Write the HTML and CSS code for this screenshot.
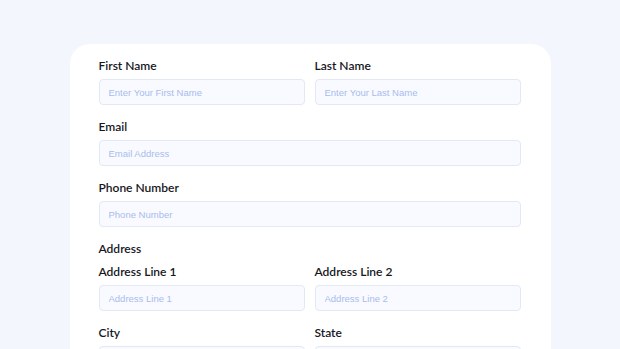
FILE: index.html
```html
<!DOCTYPE html>
<html lang="en">
<head>
  <meta charset="UTF-8" />
  <meta name="viewport" content="width=device-width, initial-scale=1.0" />
  <title>Contact Form</title>
  <link rel="stylesheet" href="styles.css">
</head>
<body>
  <div class="form-card">
    <div class="row">
      <div class="field">
        <label>First Name</label>
        <input type="text" placeholder="Enter Your First Name">
      </div>
      <div class="field">
        <label>Last Name</label>
        <input type="text" placeholder="Enter Your Last Name">
      </div>
    </div>
    <div class="field">
      <label>Email</label>
      <input type="text" placeholder="Email Address">
    </div>
    <div class="field">
      <label>Phone Number</label>
      <input type="text" placeholder="Phone Number">
    </div>
    <div class="section-title">Address</div>
    <div class="row">
      <div class="field">
        <label>Address Line 1</label>
        <input type="text" placeholder="Address Line 1">
      </div>
      <div class="field">
        <label>Address Line 2</label>
        <input type="text" placeholder="Address Line 2">
      </div>
    </div>
    <div class="row">
      <div class="field">
        <label>City</label>
        <input type="text">
      </div>
      <div class="field">
        <label>State</label>
        <input type="text">
      </div>
    </div>
  </div>
</body>
</html>
```

FILE: styles.css
```css
body {
  margin: 0;
  font-family: Lato, 'Noto Sans', sans-serif;
  background-color: #f3f6fd;
  color: #16171c;
  padding-top: 44px;
  height: 349px;
  box-sizing: border-box;
  overflow: hidden;
}
.form-card {
  width: 481px;
  margin: 0 auto;
  background-color: #fff;
  border-radius: 20px 20px 0 0;
  padding: 15px 30px 0 29px;
  box-sizing: border-box;
  min-height: 400px;
}
.row {
  display: flex;
  gap: 10px;
}
.row .field {
  flex: 1;
}
.field {
  display: flex;
  flex-direction: column;
  margin-bottom: 15px;
}
.field label,
.section-title {
  font-size: 12px;
  font-weight: 600;
  line-height: 14px;
  margin-bottom: 6px;
}
.section-title {
  margin-bottom: 9px;
}
.field input {
  height: 26px;
  box-sizing: border-box;
  border: 1px solid #e2e9f4;
  border-radius: 4px;
  background-color: #f8faff;
  padding: 0 9px;
  font-family: 'Liberation Sans', Arial, sans-serif;
  font-size: 9.5px;
  outline: none;
}
.field input::placeholder {
  color: #a8bcee;
}
```
